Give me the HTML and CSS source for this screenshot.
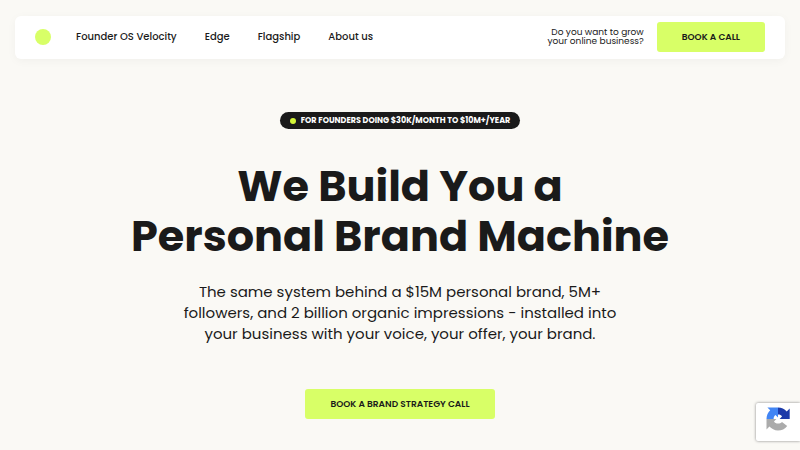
FILE: index.html
```html
<!DOCTYPE html>
<html lang="en">
<head>
    <meta charset="UTF-8">
    <meta name="viewport" content="width=device-width, initial-scale=1.0">
    <title>Founder OS</title>
    <link rel="stylesheet" href="styles.css">
</head>
<body>
    <header class="navbar">
        <a class="logo" href="#" aria-label="Home">
            <svg width="16" height="16" viewBox="0 0 16 16"><circle cx="8" cy="8" r="8" fill="#d8ff67"/></svg>
        </a>
        <nav class="nav-links">
            <a href="#">Founder OS Velocity</a>
            <a href="#">Edge</a>
            <a href="#">Flagship</a>
            <a href="#">About us</a>
        </nav>
        <p class="nav-note">Do you want to grow<br>your online business?</p>
        <button class="btn" type="button">BOOK A CALL</button>
    </header>

    <main class="hero">
        <div class="pill">
            <span class="pill-dot"></span>
            <span>FOR FOUNDERS DOING $30K/MONTH TO $10M+/YEAR</span>
        </div>
        <h1>We Build You a<br>Personal Brand Machine</h1>
        <p class="lead">The same system behind a $15M personal brand, 5M+<br>followers, and 2 billion organic impressions - installed into<br>your business with your voice, your offer, your brand.</p>
        <button class="btn" type="button">BOOK A BRAND STRATEGY CALL</button>
    </main>

    <!-- reCAPTCHA badge -->
    <div class="captcha">
        <svg width="24" height="24" viewBox="0 0 24 24">
            <path fill="#1c3aa9" d="M12 0.5C15.5 0.5 18.500 2 20.700 4.400L23.700 1.500V12H13.600L16 9.500C15.200 8.200 14 7.600 12 7.600Z"/>
            <path fill="#4285f4" d="M0.500 12C0.500 8.500 2 5.500 4.200 3.300L1.400 0.500H12V10.400L9.500 8C8.200 9 7.600 10.200 7.600 12Z"/>
            <path fill="#ababab" d="M0.500 12H10.400L8 14.500C8.900 16 10.200 16.600 12 16.600C13.700 16.600 14.900 16.100 16 15L21.200 19C19 22 15.700 23.500 12 23.500C8.500 23.500 5.600 22 3.400 19.600L0.500 22.500Z"/>
        </svg>
    </div>
</body>
</html>
```
FILE: styles.css
```css
* {
    margin: 0;
    padding: 0;
    box-sizing: border-box;
}

body {
    font-family: Poppins, Inter, sans-serif;
    background: #faf9f5;
    color: #1a1a1a;
}

a {
    color: inherit;
    text-decoration: none;
}

.navbar {
    display: flex;
    align-items: center;
    margin: 16px 15px 0;
    padding: 6px 20px 7px;
    background: #fff;
    border-radius: 6px;
    box-shadow: 0 2px 10px rgba(0, 0, 0, 0.04);
}

.logo {
    display: flex;
    margin-right: 25px;
}

.nav-links {
    display: flex;
    gap: 28px;
    font-size: 10px;
    font-weight: 500;
}

.nav-note {
    margin-left: auto;
    margin-right: 13px;
    font-size: 9px;
    line-height: 9px;
    text-align: right;
}

.btn {
    height: 30px;
    padding: 0 25px;
    border: none;
    border-radius: 3px;
    background: #d8ff67;
    color: #1a1a1a;
    font-family: inherit;
    font-size: 9px;
    font-weight: 600;
    cursor: pointer;
}

.hero {
    display: flex;
    flex-direction: column;
    align-items: center;
    padding: 53px 20px 0;
    text-align: center;
}

.pill {
    display: flex;
    align-items: center;
    gap: 5px;
    height: 17px;
    padding: 0 10px;
    border-radius: 9px;
    background: #1a1a1a;
    color: #fff;
    font-size: 8px;
    font-weight: 700;
}

.pill-dot {
    width: 6px;
    height: 6px;
    border-radius: 50%;
    background: #d3f537;
}

h1 {
    margin-top: 32px;
    font-size: 43px;
    line-height: 50px;
    font-weight: 700;
}

.lead {
    margin: 20px 0 45px;
    font-size: 15px;
    line-height: 21px;
}

.captcha {
    position: fixed;
    right: 0;
    bottom: 9px;
    width: 44px;
    height: 38px;
    padding: 4px 10px;
    background: #fff;
    border-radius: 2px 0 0 2px;
    box-shadow: 0 0 3px #808080;
}
```
